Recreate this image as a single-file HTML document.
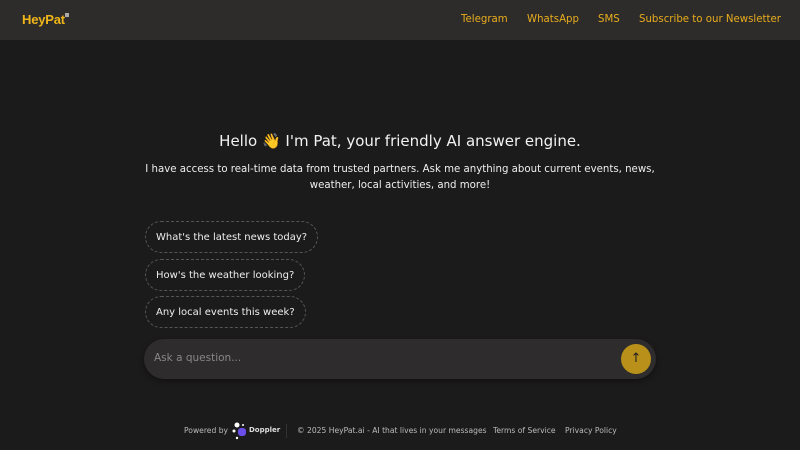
<!DOCTYPE html>
<html><head><meta charset="utf-8"><style>
*{margin:0;padding:0;box-sizing:border-box}
body{width:800px;height:450px;background:#1c1b1c;font-family:"DejaVu Sans","Liberation Sans",sans-serif;color:#eee;position:relative;overflow:hidden}
.hdr{position:absolute;left:0;top:0;width:800px;height:40px;background:#2e2b2b}
.logo{position:absolute;left:22px;top:12px;font-weight:bold;color:#f0b619;font-size:13px;font-family:"Liberation Sans",sans-serif;letter-spacing:-0.2px}
.logo sup{display:inline-block;width:4px;height:4px;background:#aaa;vertical-align:top;margin-top:1px}
.nav{position:absolute;top:14px;font-size:10.2px;color:#e8ad1c;white-space:nowrap}
h1{position:absolute;top:132px;left:0;width:800px;text-align:center;font-size:15px;font-weight:normal;color:#f2f2f2}
.sub{position:absolute;top:162px;left:145px;width:510px;text-align:center;font-size:10.2px;line-height:16px;color:#eee}
.chip{position:absolute;left:145px;height:32px;border:1px dashed #555;border-radius:16px;font-size:10px;line-height:31px;padding:0 10px;color:#eee;white-space:nowrap}
.inp{position:absolute;left:144px;top:339px;width:512px;height:40px;background:#2e2c2c;border-radius:20px;box-shadow:0 2px 6px rgba(0,0,0,.4)}
.inp span{position:absolute;left:10px;top:13px;font-size:10.5px;color:#888}
.btn{position:absolute;right:5px;top:5px;width:30px;height:30px;border-radius:50%;background:#b8901a;color:#222;text-align:center;font-size:13px;line-height:30px}
.ft{position:absolute;top:426px;font-size:7.6px;color:#bbb;white-space:nowrap}
</style></head><body>
<div class="hdr">
<div class="logo">HeyPat<sup></sup></div>
<span class="nav" style="left:461px">Telegram</span>
<span class="nav" style="left:527px">WhatsApp</span>
<span class="nav" style="left:598px">SMS</span>
<span class="nav" style="left:639px">Subscribe to our Newsletter</span>
</div>
<h1>Hello 👋 I'm Pat, your friendly AI answer engine.</h1>
<div class="sub">I have access to real-time data from trusted partners. Ask me anything about current events, news, weather, local activities, and more!</div>
<div class="chip" style="top:221px">What's the latest news today?</div>
<div class="chip" style="top:259px">How's the weather looking?</div>
<div class="chip" style="top:296px">Any local events this week?</div>
<div class="inp"><span>Ask a question...</span><div class="btn">↑</div></div>
<span class="ft" style="left:184px">Powered by</span>
<svg style="position:absolute;left:231px;top:421px" width="20" height="20"><circle cx="6" cy="4" r="2.5" fill="#fff"/><circle cx="3" cy="10" r="1.5" fill="#fff"/><circle cx="12" cy="4" r="1" fill="#fff"/><circle cx="6" cy="17" r="1.2" fill="#fff"/><rect x="7" y="7" width="8" height="8" rx="3" fill="#6b4ee8"/></svg>
<span class="ft" style="left:249px;font-weight:bold;color:#ddd;font-size:7px">Doppler</span>
<div style="position:absolute;left:286px;top:424px;width:1px;height:14px;background:#333"></div>
<span class="ft" style="left:297px">© 2025 HeyPat.ai - AI that lives in your messages</span>
<span class="ft" style="left:493px">Terms of Service</span>
<span class="ft" style="left:565px">Privacy Policy</span>
</body></html>
